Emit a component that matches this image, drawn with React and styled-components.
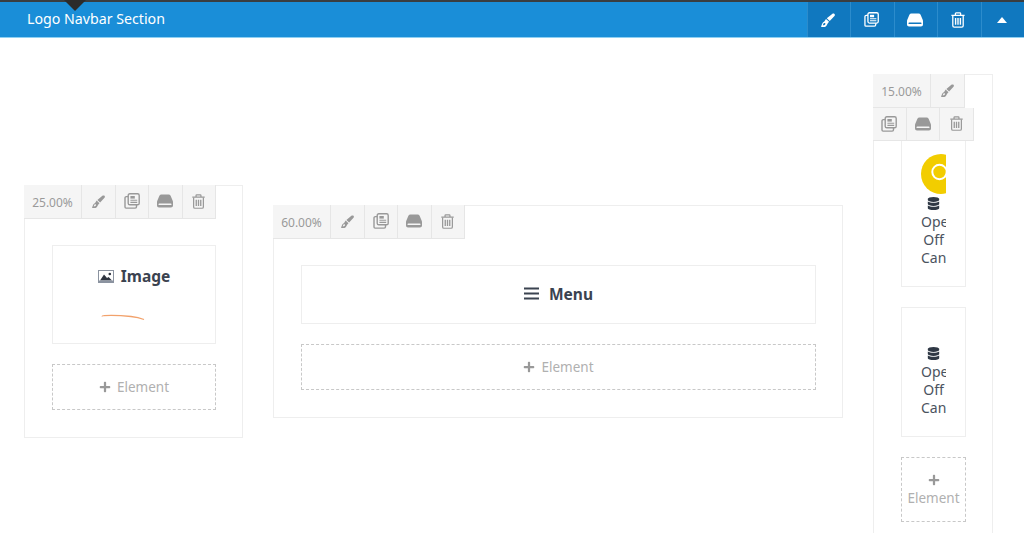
import React from "react";
import styled, { createGlobalStyle } from "styled-components";
import { FaDatabase, FaPlus } from "react-icons/fa";

const Global = createGlobalStyle`
  html, body {
    margin: 0;
    height: 533px;
    overflow: hidden;
    background: #fff;
    font-family: "Noto Sans", "Open Sans", sans-serif;
  }
  * { box-sizing: border-box; }
`;

const BrushIcon = ({ size = 14 }) => (
  <svg width={size} height={size} viewBox="0 0 16 16" fill="currentColor">
    <path d="M15.4 1c.7.7.6 1.7 0 2.4L10 9.2 6.6 6 12.8 1c.8-.6 1.9-.7 2.6 0z" />
    <path fillRule="evenodd" d="M5.7 6.8l3.5 3.3-1.4 1.6-1.6 2.8c-.5.9-1.7 1.5-3 1.5H.6c-.4 0-.6-.4-.4-.8l1.4-3.4c.4-1 1.2-1.7 2.2-2.1zM3.6 11.4c-.6.3-.9.8-1.1 1.4l-.4 1.2 1.3-.1c.6-.1 1-.4 1.3-.9l.3-.5c.1-.5-.2-1-.7-1.1-.3-.1-.5-.1-.7 0z" />
  </svg>
);

const CopyIcon = ({ size = 16 }) => (
  <svg width={size} height={size} viewBox="0 0 16 16" fill="none" stroke="currentColor" strokeWidth="1.4">
    <rect x="4.2" y="0.8" width="11" height="11" rx="1.6" />
    <path d="M4.2 3.6H2.4C1.6 3.6 1 4.2 1 5v9c0 .6.5 1.1 1.1 1.1h9c.8 0 1.4-.6 1.4-1.4V12" />
    <path d="M6.4 3h4.4v2.6H6.4z" fill="currentColor" stroke="none" />
    <path d="M6.4 7.2h6.8M6.4 9.4h6.8" strokeWidth="1.1" />
  </svg>
);

const DriveIcon = ({ size = 16 }) => (
  <svg width={size} height={size} viewBox="0 0 16 16" fill="currentColor">
    <path d="M4.4 1.6h7.2c.9 0 1.6.4 2 1.2l2 4.6c.2.5.4 1 .4 1.6v3.4c0 1.1-.9 2-2 2H2c-1.1 0-2-.9-2-2V9c0-.6.2-1.1.4-1.6l2-4.6c.4-.8 1.1-1.2 2-1.2z" />
    <path d="M2.2 10.6h11.6c.4 0 .7.3.7.6v.3c0 .3-.3.6-.7.6H2.2c-.4 0-.7-.3-.7-.6v-.3c0-.3.3-.6.7-.6z" fill="var(--drive-gap, #f5f5f5)" />
  </svg>
);

const TrashIcon = ({ size = 16 }) => (
  <svg width={size} height={size} viewBox="0 0 16 16" fill="none" stroke="currentColor" strokeWidth="1.3">
    <path d="M1.4 3.4h13.2M5.4 3.2V1.6c0-.4.3-.7.7-.7h3.8c.4 0 .7.3.7.7v1.6" />
    <path d="M2.8 3.6v10.2c0 .8.6 1.4 1.4 1.4h7.6c.8 0 1.4-.6 1.4-1.4V3.6" />
    <path d="M5.6 6v6.8M8 6v6.8M10.4 6v6.8" strokeWidth="1.4" />
  </svg>
);

const PictureIcon = () => (
  <svg width="16" height="13" viewBox="0 0 16 13">
    <rect x="0.5" y="0.5" width="15" height="12" fill="#fff" stroke="#8b93a0" />
    <circle cx="11.8" cy="4" r="1.3" fill="#2f3540" />
    <path d="M2 10.5L6 4.5l3 3.6 1.6-1.2 3.4 3.6z" fill="#2f3540" />
    <path d="M1 10.5h14V12H1z" fill="#8b93a0" />
  </svg>
);

const BarsIcon = () => (
  <svg width="15" height="13" viewBox="0 0 15 13" fill="currentColor">
    <path d="M0 .5h15v2H0zM0 5.500h15v2H0zM0 10.500h15v2H0z" />
  </svg>
);

const UpArrow = () => (
  <svg width="10" height="6" viewBox="0 0 10 6" fill="currentColor">
    <path d="M5 0l5 6H0z" />
  </svg>
);

const Navbar = styled.div`
  position: relative;
  height: 38px;
  display: flex;
  align-items: stretch;
  justify-content: space-between;
  background: #1a8ed8;
  border-top: 2px solid #3a3d40;
  border-bottom: 1px solid #8fd0f2;
  color: #fff;
`;

const Caret = styled.span`
  position: absolute;
  left: 64px;
  top: -2px;
  width: 0;
  height: 0;
  border-left: 11px solid transparent;
  border-right: 11px solid transparent;
  border-top: 11px solid #2b2b2b;
`;

const NavTitle = styled.div`
  margin-left: 27px;
  font-size: 14.2px;
  line-height: 33px;
`;

const NavActions = styled.div`
  display: flex;
  background: #1078bf;
  --drive-gap: #1078bf;
`;

const NavButton = styled.div`
  width: 43.4px;
  padding-right: 2px;
  display: flex;
  align-items: center;
  justify-content: center;
  border-left: 1px solid #2c8ccc;
`;

const Row = styled.div`
  display: flex;
  align-items: center;
  gap: 30px;
  padding: 36px 0 0 24px;
`;

const Column = styled.div`
  position: relative;
  flex: none;
  width: ${(p) => p.$width}px;
  padding: 59px 26px ${(p) => p.$bottom || 27}px 27px;
  display: flex;
  flex-direction: column;
  gap: 20px;
  border: 1px solid #eee;
`;

const Toolbar = styled.div`
  position: absolute;
  left: -1px;
  top: -1px;
  display: flex;
  flex-wrap: wrap;
  max-width: ${(p) => (p.$wrap ? "102px" : "none")};
  color: #999;
`;

const Percent = styled.div`
  width: 58px;
  height: 33.5px;
  padding-top: 2px;
  display: flex;
  align-items: center;
  justify-content: center;
  background: #f5f5f5;
  border-right: 1px solid #e6e6e6;
  border-bottom: 1px solid #e6e6e6;
  font-size: 12px;
  color: #9a9a9a;
`;

const ToolButton = styled.div`
  width: 33.5px;
  height: 33.5px;
  display: flex;
  align-items: center;
  justify-content: center;
  background: #f5f5f5;
  border-right: 1px solid #e6e6e6;
  border-bottom: 1px solid #e6e6e6;
`;

const ElementCard = styled.div`
  border: 1px solid #eee;
  height: ${(p) => p.$height}px;
  padding: ${(p) => p.$padding || "0"};
  display: flex;
  flex-direction: column;
  align-items: center;
  justify-content: ${(p) => (p.$center ? "center" : "flex-start")};
  color: #3b4350;
  overflow: hidden;
`;

const Heading = styled.div`
  display: flex;
  align-items: center;
  gap: ${(p) => p.$gap}px;
  font-size: 15.5px;
  font-weight: 700;
  line-height: 22px;
`;

const Swoosh = styled.svg`
  margin: 27px 22px 0 0;
  display: block;
`;

const Widget = styled.div`
  width: 25px;
  display: flex;
  flex-direction: column;
  align-items: center;
  overflow: hidden;
`;

const WidgetIcon = styled.div`
  height: 19px;
  display: flex;
  align-items: center;
  font-size: 13px;
  color: #2f3845;
`;

const WidgetLabel = styled.div`
  width: 25px;
  text-align: center;
  font-size: 14px;
  line-height: 18px;
  color: #4b5360;
`;

const Line = styled.div`
  white-space: nowrap;
`;

const AddElement = styled.div`
  height: ${(p) => p.$height}px;
  padding-top: ${(p) => (p.$stack ? 2 : 0)}px;
  border: 1px dashed #c8c8c8;
  display: flex;
  flex-direction: ${(p) => (p.$stack ? "column" : "row")};
  align-items: center;
  justify-content: center;
  gap: ${(p) => (p.$stack ? 3 : 6)}px;
  font-size: 13.5px;
  color: #b0b0b0;

  svg {
    font-size: 12px;
    color: #999;
  }
`;

const Tools = ({ label, wrap }) => (
  <Toolbar $wrap={wrap}>
    <Percent>{label}</Percent>
    <ToolButton><BrushIcon size={13} /></ToolButton>
    <ToolButton><CopyIcon /></ToolButton>
    <ToolButton><DriveIcon /></ToolButton>
    <ToolButton><TrashIcon size={15} /></ToolButton>
  </Toolbar>
);

const OpenOffCanvas = () => (
  <>
    <WidgetIcon><FaDatabase /></WidgetIcon>
    <WidgetLabel>
      <Line>Open</Line>
      <Line>Off</Line>
      <Line>Canvas</Line>
    </WidgetLabel>
  </>
);

export default function App() {
  return (
    <>
      <Global />
      <Navbar>
        <Caret />
        <NavTitle>Logo Navbar Section</NavTitle>
        <NavActions>
          <NavButton><BrushIcon size={14} /></NavButton>
          <NavButton><CopyIcon size={15} /></NavButton>
          <NavButton><DriveIcon /></NavButton>
          <NavButton><TrashIcon /></NavButton>
          <NavButton><UpArrow /></NavButton>
        </NavActions>
      </Navbar>
      <Row>
        <Column $width={219}>
          <Tools label="25.00%" />
          <ElementCard $height={99} $padding="19px 0 0">
            <Heading $gap={7}><PictureIcon />Image</Heading>
            <Swoosh width="44" height="7" viewBox="0 0 44 7" fill="none">
              <path d="M1 2.5C1 1 16 1 30 2.5c6 .6 10 1.8 13 3" stroke="#f2a26c" strokeWidth="1.3" />
            </Swoosh>
          </ElementCard>
          <AddElement $height={46}><FaPlus />Element</AddElement>
        </Column>
        <Column $width={570}>
          <Tools label="60.00%" />
          <ElementCard $height={59} $center $padding="0 0 2px">
            <Heading $gap={10}><BarsIcon />Menu</Heading>
          </ElementCard>
          <AddElement $height={46}><FaPlus />Element</AddElement>
        </Column>
        <Column $width={120} $bottom={26}>
          <Tools label="15.00%" wrap />
          <ElementCard $height={153} $padding="19px 0 0">
            <Widget>
              <svg width="25" height="40" viewBox="0 0 25 40">
                <circle cx="20" cy="20" r="20" fill="#f2cd00" />
                <circle cx="18.5" cy="18" r="7.2" fill="#f2cd00" stroke="#fff" strokeWidth="2" />
              </svg>
              <OpenOffCanvas />
            </Widget>
          </ElementCard>
          <ElementCard $height={130} $padding="36px 0 0">
            <Widget>
              <OpenOffCanvas />
            </Widget>
          </ElementCard>
          <AddElement $height={65} $stack><FaPlus />Element</AddElement>
        </Column>
      </Row>
    </>
  );
}
